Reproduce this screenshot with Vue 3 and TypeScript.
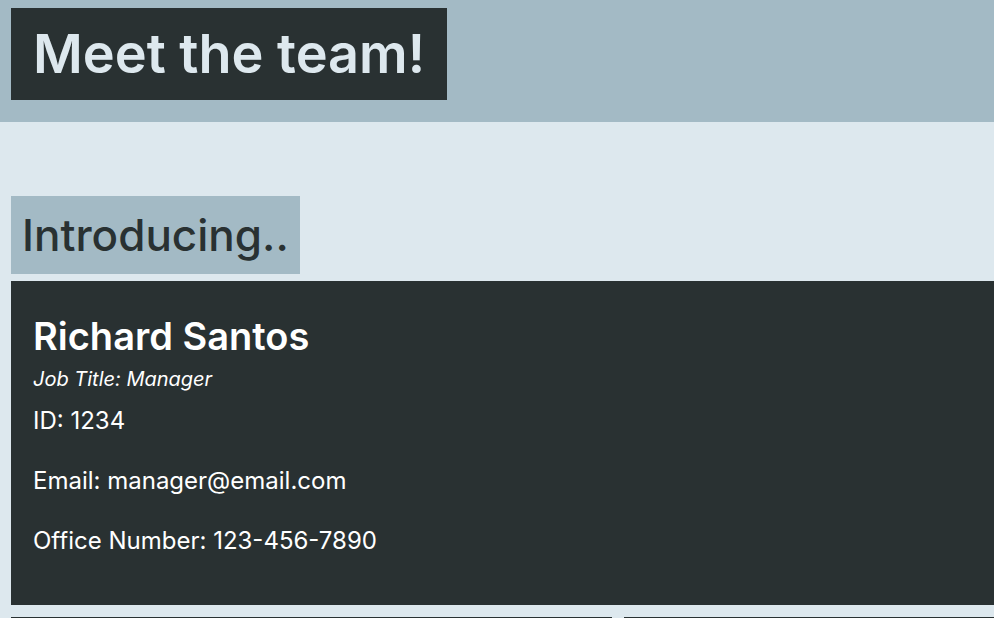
<script setup lang="ts">
interface Detail {
  label: string
  value: string
}

interface Member {
  name: string
  title: string
  details: Detail[]
}

const manager: Member = {
  name: 'Richard Santos',
  title: 'Manager',
  details: [
    { label: 'ID', value: '1234' },
    { label: 'Email', value: 'manager@email.com' },
    { label: 'Office Number', value: '123-456-7890' },
  ],
}
</script>

<template>
  <div class="page">
    <header class="banner">
      <h1 class="banner-title">Meet the team!</h1>
    </header>
    <main class="team">
      <h2 class="intro">Introducing..</h2>
      <article class="card">
        <h3 class="name">{{ manager.name }}</h3>
        <p class="role">Job Title: {{ manager.title }}</p>
        <div class="details">
          <p v-for="detail in manager.details" :key="detail.label">
            {{ detail.label }}: {{ detail.value }}
          </p>
        </div>
      </article>
      <div class="row">
        <div class="tile"></div>
        <div class="tile"></div>
      </div>
    </main>
  </div>
</template>

<style>
body {
  background: #dde8ee;
}
</style>

<style scoped>
.page {
  height: 100vh;
  overflow: hidden;
  color: #fff;
  font-family: Inter, "Liberation Sans", sans-serif;
  font-size: 24px;
  line-height: 36px;
}

h1,
h2,
h3,
p {
  margin: 0;
}

.banner {
  padding: 8px 11px 22px;
  background: #a3bac5;
}

.banner-title {
  width: fit-content;
  padding: 11px 22px;
  background: #293132;
  color: #dde8ee;
  font-size: 54px;
  font-weight: 600;
  line-height: 70px;
}

.team {
  padding: 74px 0 0 11px;
}

.intro {
  width: fit-content;
  padding: 11px;
  background: #a3bac5;
  color: #293132;
  font-size: 44px;
  font-weight: 500;
  line-height: 56px;
}

.card {
  margin-top: 7px;
  padding: 30px 22px 46px;
  background: #293132;
}

.name {
  font-size: 38px;
  font-weight: 600;
  line-height: 50px;
}

.role {
  font-size: 20px;
  font-style: italic;
}

.details {
  display: grid;
  gap: 24px;
  margin-top: 6px;
}

.row {
  display: grid;
  grid-template-columns: 601fr 370fr;
  gap: 12px;
  margin-top: 12px;
}

.tile {
  min-height: 320px;
  background: #293132;
}
</style>
